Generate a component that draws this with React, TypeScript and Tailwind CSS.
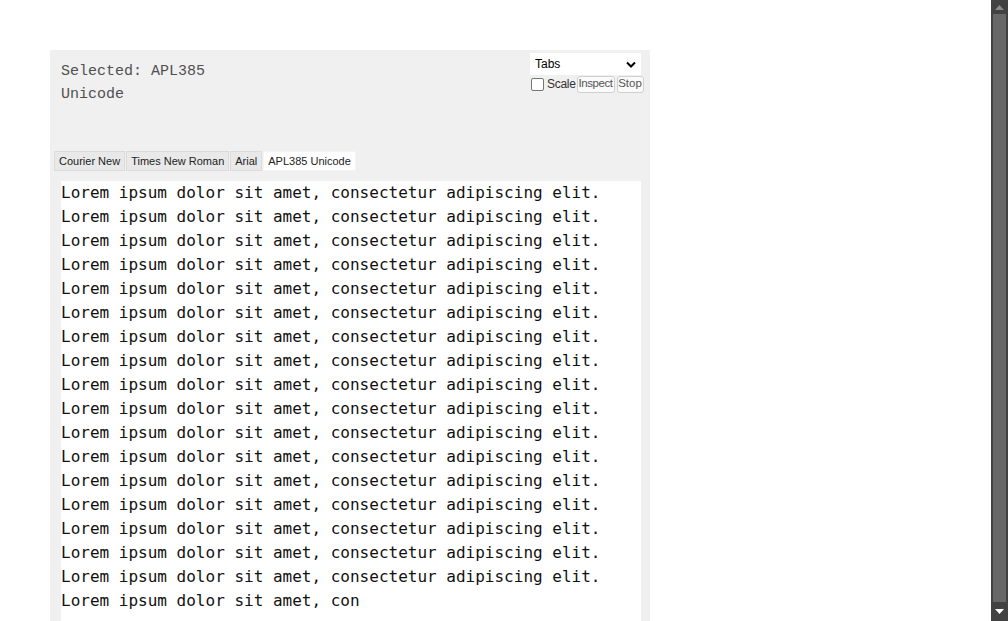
import React from 'react';

const LINE = 'Lorem ipsum dolor sit amet, consectetur adipiscing elit.';
const TABS = ['Courier New', 'Times New Roman', 'Arial', 'APL385 Unicode'];

function Scrollbar() {
  return (
    <div className="flex h-full w-[17px] shrink-0 flex-col bg-[#424242]">
      <div className="flex h-[14px] items-center justify-center">
        <svg width="9" height="5" viewBox="0 0 9 5">
          <path d="M0 5 L4.5 0 L9 5 Z" fill="#8c8c8c" />
        </svg>
      </div>
      <div className="mx-[2px] flex-1 bg-[#686868]" />
      <div className="flex h-[19px] items-center justify-center">
        <svg width="9" height="5" viewBox="0 0 9 5">
          <path d="M0 0 L9 0 L4.5 5 Z" fill="#ffffff" />
        </svg>
      </div>
    </div>
  );
}

export default function App() {
  const active = 'APL385 Unicode';

  return (
    <div className="flex h-[621px] w-[1008px] overflow-hidden bg-white">
      <div className="flex-1 pl-[50px] pt-[50px]">
        <div className="h-full w-[600px] bg-[#f0f0f0]">
          {/* Header */}
          <div className="flex h-[101px] justify-between">
            <div className="w-[190px] pl-[11px] pt-[10px] text-[15px] leading-[23px] text-[#505050] [font-family:'Liberation_Mono',monospace]">
              Selected: APL385 Unicode
            </div>
            <div className="flex w-[120px] flex-col items-start pr-[7px] pt-[3px] [font-family:'Liberation_Sans',sans-serif]">
              <div className="flex h-[22px] w-[111px] items-center justify-between bg-white pl-[5px] pr-[5px] text-[12px] text-black">
                <span>Tabs</span>
                <svg width="10" height="7" viewBox="0 0 10 7">
                  <path d="M1 1.5 L5 5.5 L9 1.5" fill="none" stroke="#000" strokeWidth="2" />
                </svg>
              </div>
              <div className="flex items-center whitespace-nowrap">
                <span className="ml-[1px] h-[13px] w-[13px] shrink-0 rounded-[2px] border border-[#767676] bg-white" />
                <span className="ml-[3px] text-[12px] tracking-[-0.3px] text-[#333]">Scale</span>
                <span className="ml-[1px] flex h-[17px] w-[38px] shrink-0 items-center justify-center rounded-[3px] border border-[#d0d0d0] bg-[#fafafa] text-[11.5px] tracking-[-0.4px] text-[#555]">
                  Inspect
                </span>
                <span className="ml-[2px] flex h-[17px] w-[27px] shrink-0 items-center justify-center rounded-[3px] border border-[#d0d0d0] bg-[#fafafa] text-[11.5px] text-[#555]">
                  Stop
                </span>
              </div>
            </div>
          </div>

          {/* Tabs */}
          <div className="flex h-[20px] gap-[1px] pl-[4px] [font-family:'Liberation_Sans',sans-serif]">
            {TABS.map((t) => (
              <div
                key={t}
                className={`flex items-center border px-[4px] text-[11px] text-[#222] ${
                  t === active ? 'border-[#f4f4f4] bg-white' : 'border-[#dcdcdc] bg-[#e9e9e9]'
                }`}
              >
                {t}
              </div>
            ))}
          </div>

          {/* Content */}
          <div className="ml-[11px] mt-[10px] h-[460px] w-[580px] bg-white text-[16px] leading-[24px] text-[#111] [font-family:'DejaVu_Sans_Mono',monospace]">
            {Array.from({ length: 17 }).map((_, i) => (
              <div key={i} className="whitespace-pre">
                {LINE}
              </div>
            ))}
            <div className="whitespace-pre">Lorem ipsum dolor sit amet, con</div>
          </div>
        </div>
      </div>
      <Scrollbar />
    </div>
  );
}
